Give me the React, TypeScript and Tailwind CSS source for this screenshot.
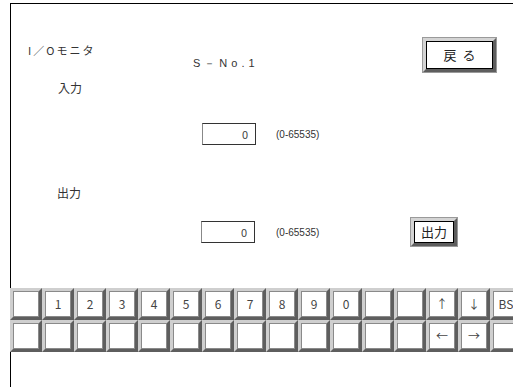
import React from 'react';

const ROW1 = ['', '1', '2', '3', '4', '5', '6', '7', '8', '9', '0', '', '', '↑', '↓', 'BS'];
const ROW2 = ['', '', '', '', '', '', '', '', '', '', '', '', '', '←', '→', ''];

const Key = ({ label }: { label: string }) => (
  <div className="w-[32px] h-[32px] shrink-0 border-[3px] border-t-[#cfcfcf] border-l-[#cfcfcf] border-r-[#5e5e5e] border-b-[#5e5e5e] bg-white">
    <div className="h-full border border-[#8a8a8a] flex items-center justify-center text-[12px] text-[#444]">
      {label}
    </div>
  </div>
);

const Button = ({ label, w, h, spaced }: { label: string; w: string; h: string; spaced?: boolean }) => (
  <div className={`${w} ${h} shrink-0 border-[3px] border-t-[#d4d4d4] border-l-[#d4d4d4] border-r-[#5e5e5e] border-b-[#5e5e5e] bg-white outline outline-1 outline-[#9a9a9a]`}>
    <div className={`h-full border border-black flex items-center justify-center text-[13px] text-[#222] ${spaced ? 'tracking-[6px] pl-[6px]' : ''}`}>
      {label}
    </div>
  </div>
);

const ValueBox = () => (
  <div className="w-[54px] h-[22px] shrink-0 border border-[#333] border-l-[#888] flex items-center justify-end pr-[7px] text-[11px] text-[#444]">
    0
  </div>
);

const App: React.FC = () => {
  return (
    <div className="w-[513px] h-[387px] bg-white overflow-hidden text-black" style={{ fontFamily: '"Noto Sans CJK JP", "Liberation Sans", sans-serif' }}>
      <div className="ml-[10px] mt-[3px] h-[384px] border-t border-l border-black flex flex-col">
        {/* Header */}
        <div className="flex items-start mt-[34px]">
          <div className="w-[182px] pl-[17px] mt-[4px] text-[11px] leading-[16px] tracking-[2px] text-[#333]">I／Oモニタ</div>
          <div className="w-[230px] mt-[17px] text-[11px] leading-[16px] tracking-[4px] text-[#333]" style={{ fontFamily: '"Liberation Sans", sans-serif' }}>S－No.1</div>
          <Button label="戻る" w="w-[73px]" h="h-[34px]" spaced />
        </div>

        {/* 入力 */}
        <div className="ml-[47px] mt-[8px] text-[12px] leading-[16px] text-[#333]">入力</div>
        <div className="flex items-center mt-[27px] ml-[191px]">
          <ValueBox />
          <span className="ml-[20px] text-[10px] text-[#333]" style={{ fontFamily: '"Liberation Sans", sans-serif' }}>(0-65535)</span>
        </div>

        {/* 出力 */}
        <div className="ml-[46px] mt-[40px] text-[12px] leading-[16px] text-[#333]">出力</div>
        <div className="flex items-center mt-[17px] ml-[190px]">
          <ValueBox />
          <span className="ml-[21px] w-[135px] text-[10px] text-[#333]" style={{ fontFamily: '"Liberation Sans", sans-serif' }}>(0-65535)</span>
          <Button label="出力" w="w-[46px]" h="h-[28px]" />
        </div>

        {/* Keyboard */}
        <div className="flex flex-col -ml-px mt-[42px]">
          <div className="flex">
            {ROW1.map((k, i) => <Key key={i} label={k} />)}
          </div>
          <div className="flex">
            {ROW2.map((k, i) => <Key key={i} label={k} />)}
          </div>
        </div>
      </div>
    </div>
  );
};

export default App;
